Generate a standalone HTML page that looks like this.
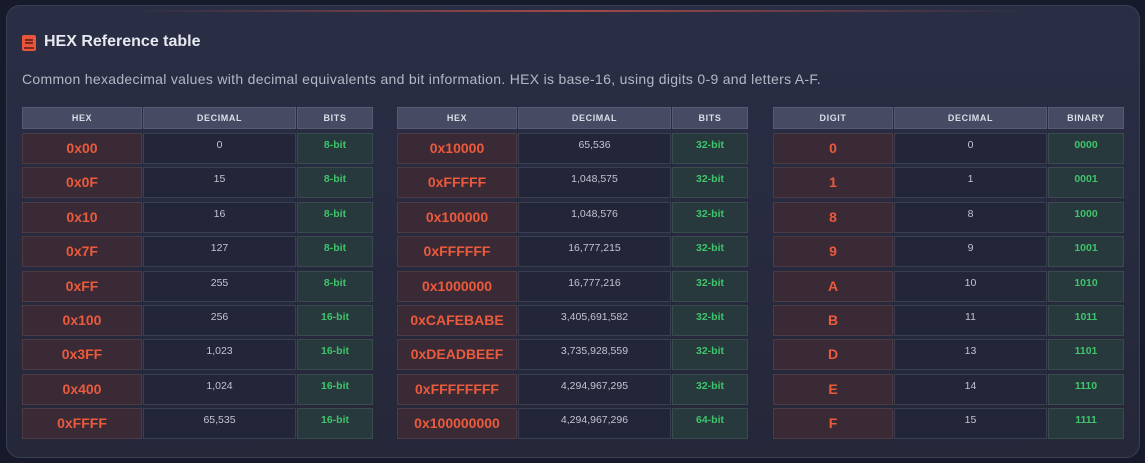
<!DOCTYPE html>
<html><head><style>
*{margin:0;padding:0;box-sizing:border-box}
body{width:1145px;height:463px;background:#161a2b;font-family:"Liberation Sans",sans-serif;overflow:hidden;position:relative}
.card{position:absolute;left:6px;top:5px;width:1134px;height:453px;border-radius:14px;background:linear-gradient(180deg,#2a2e45 0%,#252839 100%);border:1px solid #3a3e55}
.glow{position:absolute;left:120px;top:4px;width:900px;height:2px;background:linear-gradient(90deg,transparent,#c0504a 50%,transparent);opacity:.8}
h1{position:absolute;left:44px;top:33px;font-size:16px;font-weight:bold;color:#e8e9f0}
.icon{position:absolute;left:22px;top:35px;width:14px;height:16px;background:#e8553b;border-radius:2px}
.icon:before{content:"";position:absolute;left:3px;top:4px;width:8px;height:1.5px;background:#7a2a20;box-shadow:0 3px 0 #7a2a20}
.icon:after{content:"";position:absolute;left:2px;bottom:2px;width:10px;height:2px;background:#7a2a20}
.desc{position:absolute;left:22px;top:71px;font-size:14px;letter-spacing:.3px;color:#b4b7c6}
.t{position:absolute;top:107px;width:351px}
.r{display:flex;gap:1px}
.h{height:22px;margin-bottom:4px}
.h div{background:#464a62;border:1px solid #565b72;color:#dcdee8;font-size:9px;font-weight:bold;letter-spacing:.6px;text-align:center;line-height:20px}
.d{height:31px;margin-bottom:3.4px}
.d div{border:1px solid #3b3f52;text-align:center}
.c1{width:120px}.c2{width:153px}.c3{width:76px}
.d .c1{background:#3a2a36;border-color:#4e3a42;color:#ec5a3c;font-weight:bold;font-size:14px;line-height:29px}
.d .c2{background:#232638;color:#c2c4d0;font-size:10.5px;line-height:23px}
.d .c3{background:#27393c;border-color:#3a4b4e;color:#3fc46c;font-weight:bold;font-size:10.5px;line-height:23px}
</style></head><body>
<div class="card"><div class="glow"></div></div>
<div class="icon"></div>
<h1>HEX Reference table</h1>
<div class="desc">Common hexadecimal values with decimal equivalents and bit information. HEX is base-16, using digits 0-9 and letters A-F.</div>

<div class="t" style="left:22px">
<div class="r h"><div class="c1">HEX</div><div class="c2">DECIMAL</div><div class="c3">BITS</div></div>
<div class="r d"><div class="c1">0x00</div><div class="c2">0</div><div class="c3">8-bit</div></div>
<div class="r d"><div class="c1">0x0F</div><div class="c2">15</div><div class="c3">8-bit</div></div>
<div class="r d"><div class="c1">0x10</div><div class="c2">16</div><div class="c3">8-bit</div></div>
<div class="r d"><div class="c1">0x7F</div><div class="c2">127</div><div class="c3">8-bit</div></div>
<div class="r d"><div class="c1">0xFF</div><div class="c2">255</div><div class="c3">8-bit</div></div>
<div class="r d"><div class="c1">0x100</div><div class="c2">256</div><div class="c3">16-bit</div></div>
<div class="r d"><div class="c1">0x3FF</div><div class="c2">1,023</div><div class="c3">16-bit</div></div>
<div class="r d"><div class="c1">0x400</div><div class="c2">1,024</div><div class="c3">16-bit</div></div>
<div class="r d"><div class="c1">0xFFFF</div><div class="c2">65,535</div><div class="c3">16-bit</div></div>
</div>

<div class="t" style="left:397px">
<div class="r h"><div class="c1">HEX</div><div class="c2">DECIMAL</div><div class="c3">BITS</div></div>
<div class="r d"><div class="c1">0x10000</div><div class="c2">65,536</div><div class="c3">32-bit</div></div>
<div class="r d"><div class="c1">0xFFFFF</div><div class="c2">1,048,575</div><div class="c3">32-bit</div></div>
<div class="r d"><div class="c1">0x100000</div><div class="c2">1,048,576</div><div class="c3">32-bit</div></div>
<div class="r d"><div class="c1">0xFFFFFF</div><div class="c2">16,777,215</div><div class="c3">32-bit</div></div>
<div class="r d"><div class="c1">0x1000000</div><div class="c2">16,777,216</div><div class="c3">32-bit</div></div>
<div class="r d"><div class="c1">0xCAFEBABE</div><div class="c2">3,405,691,582</div><div class="c3">32-bit</div></div>
<div class="r d"><div class="c1">0xDEADBEEF</div><div class="c2">3,735,928,559</div><div class="c3">32-bit</div></div>
<div class="r d"><div class="c1">0xFFFFFFFF</div><div class="c2">4,294,967,295</div><div class="c3">32-bit</div></div>
<div class="r d"><div class="c1">0x100000000</div><div class="c2">4,294,967,296</div><div class="c3">64-bit</div></div>
</div>

<div class="t" style="left:773px">
<div class="r h"><div class="c1">DIGIT</div><div class="c2">DECIMAL</div><div class="c3">BINARY</div></div>
<div class="r d"><div class="c1">0</div><div class="c2">0</div><div class="c3">0000</div></div>
<div class="r d"><div class="c1">1</div><div class="c2">1</div><div class="c3">0001</div></div>
<div class="r d"><div class="c1">8</div><div class="c2">8</div><div class="c3">1000</div></div>
<div class="r d"><div class="c1">9</div><div class="c2">9</div><div class="c3">1001</div></div>
<div class="r d"><div class="c1">A</div><div class="c2">10</div><div class="c3">1010</div></div>
<div class="r d"><div class="c1">B</div><div class="c2">11</div><div class="c3">1011</div></div>
<div class="r d"><div class="c1">D</div><div class="c2">13</div><div class="c3">1101</div></div>
<div class="r d"><div class="c1">E</div><div class="c2">14</div><div class="c3">1110</div></div>
<div class="r d"><div class="c1">F</div><div class="c2">15</div><div class="c3">1111</div></div>
</div>
</body></html>
